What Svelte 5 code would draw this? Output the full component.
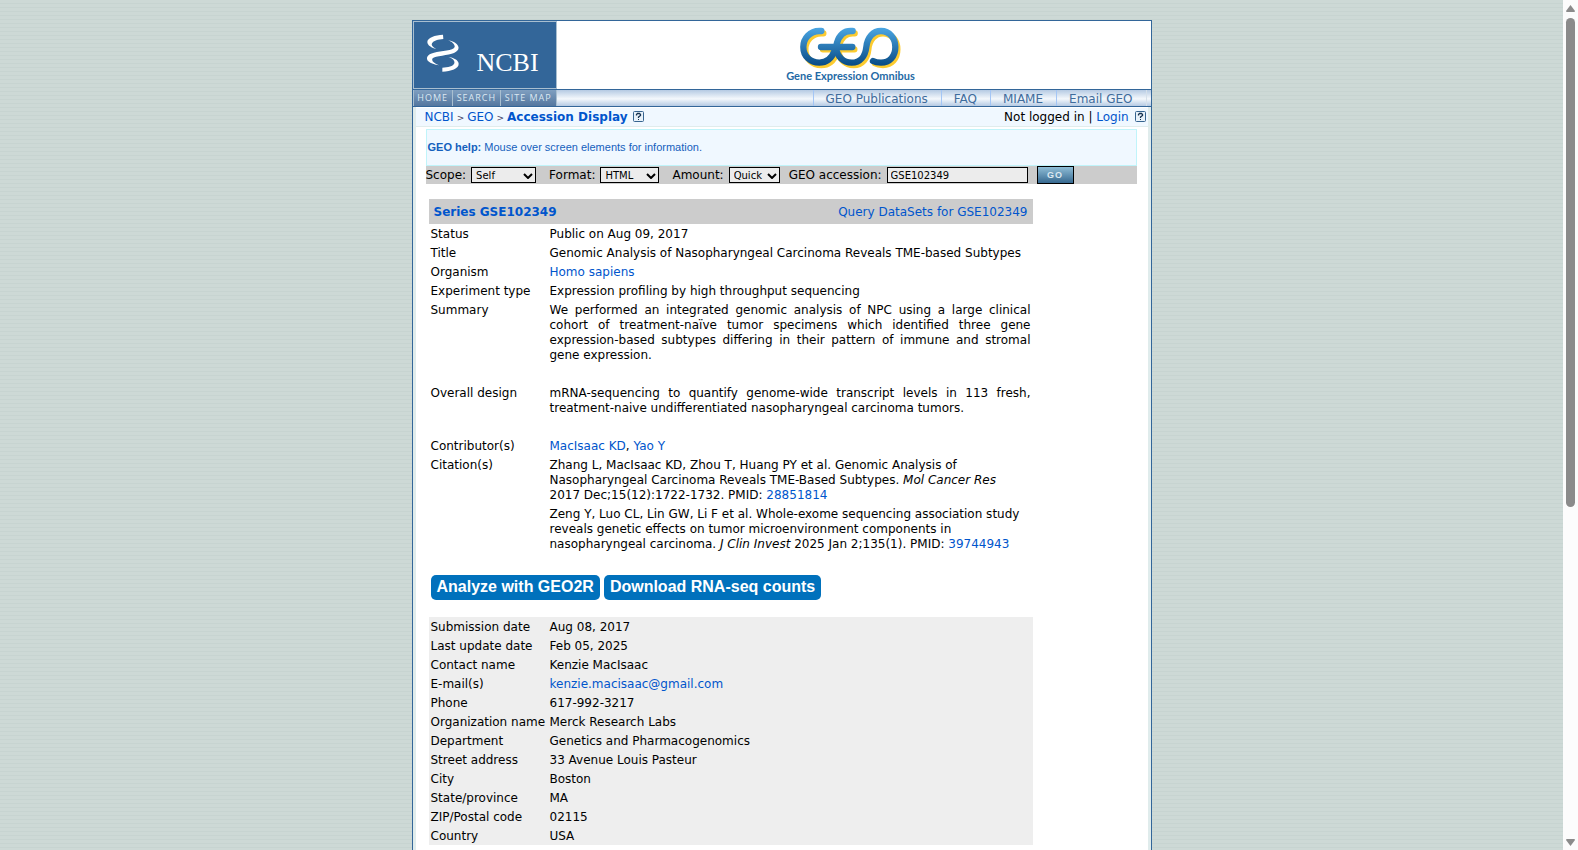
<script lang="ts">
	let scope = $state('Self');
	let format = $state('HTML');
	let amount = $state('Quick');
	let accession = $state('GSE102349');

	const siteLinks = ['HOME', 'SEARCH', 'SITE MAP'];
	const geoLinks = ['GEO Publications', 'FAQ', 'MIAME', 'Email GEO'];

	const contact: { label: string; value: string; href?: string }[] = [
		{ label: 'Submission date', value: 'Aug 08, 2017' },
		{ label: 'Last update date', value: 'Feb 05, 2025' },
		{ label: 'Contact name', value: 'Kenzie MacIsaac' },
		{ label: 'E-mail(s)', value: 'kenzie.macisaac@gmail.com', href: 'mailto:kenzie.macisaac@gmail.com' },
		{ label: 'Phone', value: '617-992-3217' },
		{ label: 'Organization name', value: 'Merck Research Labs' },
		{ label: 'Department', value: 'Genetics and Pharmacogenomics' },
		{ label: 'Street address', value: '33 Avenue Louis Pasteur' },
		{ label: 'City', value: 'Boston' },
		{ label: 'State/province', value: 'MA' },
		{ label: 'ZIP/Postal code', value: '02115' },
		{ label: 'Country', value: 'USA' },
	];
</script>

{#snippet help()}
	<a class="help" href="#help" aria-label="Help">
		<svg width="11" height="11" viewBox="0 0 11 11" aria-hidden="true">
			<rect x="0.5" y="0.5" width="10" height="10" rx="1" fill="#e8f2fa" stroke="#36648f" />
			<path d="M3.5 4.5V3.5L4.5 2.5H6.5L7.5 3.5V4.5L5.5 6V7" fill="none" stroke="#16324f" stroke-width="1.3" />
			<rect x="5" y="8" width="1" height="1" fill="#16324f" />
		</svg>
	</a>
{/snippet}

{#snippet mark()}
	<path d="M182 49H176C148 49 128 71 128 97C128 125 149 144 176 144C200 144 214 129 222 108L226 97H181" />
	<path d="M276 49H270C250 49 236 62 229 84L226 97H275" />
	<path d="M226 97C229 127 248 144 273 144C299 144 314 124 317 97C320 68 337 49 361 49C387 49 404 71 404 97C404 125 387 144 361 144C351 144 344 143 337 139" />
{/snippet}

<div class="page">
	<header>
		<div class="banner">
			<a class="ncbi" href="#ncbi">
				<svg width="32" height="38" viewBox="0 0 96 114" aria-hidden="true">
					<path d="M48 2C24 3 1 11 1 24C1 34 14 42 28 45C16 39 12 34 15 28C19 20 34 16 49 15Z" />
					<path d="M63 19C75 23 84 31 83 39C80 50 42 51 21 56C-1 61-4 74 4 82C11 89 23 92 36 94C20 87 12 80 17 73C24 66 65 64 81 57C97 50 98 39 89 30C82 24 73 21 63 19Z" />
					<path d="M64 69C78 73 84 81 82 88C79 97 63 101 46 101V113C72 112 96 103 95 89C94 78 80 71 64 69Z" />
				</svg>
				<span>NCBI</span>
			</a>
			<a class="geo" href="#geo">
				<svg width="102" height="42" viewBox="115 37 306 126" aria-hidden="true">
					<defs>
						<linearGradient id="blue" gradientUnits="userSpaceOnUse" x1="0" y1="40" x2="0" y2="155">
							<stop offset="0" stop-color="#4aa5e2" />
							<stop offset="1" stop-color="#074983" />
						</linearGradient>
					</defs>
					<g class="stroke shadow" transform="translate(6 7)">{@render mark()}</g>
					<g class="stroke" stroke="url(#blue)">{@render mark()}</g>
				</svg>
				<span>Gene Expression Omnibus</span>
			</a>
		</div>
		<div class="bar">
			<nav class="site">
				{#each siteLinks as link}<a href="#site">{link}</a>{/each}
			</nav>
			<nav class="geo-nav">
				{#each geoLinks as link}<a href="#geo">{link}</a>{/each}
			</nav>
		</div>
	</header>

	<main>
		<div class="crumbs">
			<span class="path">
				<a href="#ncbi">NCBI</a><small>&gt;</small><a href="#geo">GEO</a><small>&gt;</small><a href="#display"><b>Accession Display</b></a>
				{@render help()}
			</span>
			<span class="login">Not logged in | <a href="#login">Login</a> {@render help()}</span>
		</div>

		<div class="content">
			<div class="helpbox"><b>GEO help:</b> Mouse over screen elements for information.</div>

			<form onsubmit={(e) => e.preventDefault()}>
				<label for="scope">Scope:</label>
				<span class="pick scope">
					<select id="scope" bind:value={scope}>
						<option>Self</option><option>Platform</option><option>Samples</option><option>Series</option><option>Family</option>
					</select>
					<svg width="10" height="6" viewBox="0 0 10 6" aria-hidden="true"><path d="M1 1L5 5L9 1" /></svg>
				</span>
				<label for="format">Format:</label>
				<span class="pick format">
					<select id="format" bind:value={format}>
						<option>HTML</option><option>SOFT</option><option>MINiML</option>
					</select>
					<svg width="10" height="6" viewBox="0 0 10 6" aria-hidden="true"><path d="M1 1L5 5L9 1" /></svg>
				</span>
				<label for="amount">Amount:</label>
				<span class="pick amount">
					<select id="amount" bind:value={amount}>
						<option>Brief</option><option>Quick</option><option>Full</option><option>Data</option>
					</select>
					<svg width="10" height="6" viewBox="0 0 10 6" aria-hidden="true"><path d="M1 1L5 5L9 1" /></svg>
				</span>
				<label for="accession">GEO accession:</label>
				<input id="accession" type="text" bind:value={accession} />
				<button class="go" type="submit">GO</button>
			</form>

			<div class="record">
				<div class="title">
					<a href="#series"><b>Series GSE102349</b></a>
					<a href="#query">Query DataSets for GSE102349</a>
				</div>
				<table>
					<tbody>
						<tr><th>Status</th><td>Public on Aug 09, 2017</td></tr>
						<tr><th>Title</th><td>Genomic Analysis of Nasopharyngeal Carcinoma Reveals TME-based Subtypes</td></tr>
						<tr><th>Organism</th><td><a href="#organism">Homo sapiens</a></td></tr>
						<tr><th>Experiment type</th><td>Expression profiling by high throughput sequencing</td></tr>
						<tr class="long">
							<th>Summary</th>
							<td>We performed an integrated genomic analysis of NPC using a large clinical cohort of treatment-naïve tumor specimens which identified three gene expression-based subtypes differing in their pattern of immune and stromal gene expression.</td>
						</tr>
						<tr class="long">
							<th>Overall design</th>
							<td>mRNA-sequencing to quantify genome-wide transcript levels in 113 fresh, treatment-naive undifferentiated nasopharyngeal carcinoma tumors.</td>
						</tr>
						<tr><th>Contributor(s)</th><td><a href="#macisaac">MacIsaac KD</a>, <a href="#yao">Yao Y</a></td></tr>
						<tr>
							<th>Citation(s)</th>
							<td>
								<p>Zhang L, MacIsaac KD, Zhou T, Huang PY et al. Genomic Analysis of Nasopharyngeal Carcinoma Reveals TME-Based Subtypes. <i>Mol Cancer Res</i> <span class="issue">2017 Dec;15(12):1722-1732.</span> PMID: <a href="#28851814">28851814</a></p>
								<p>Zeng Y, Luo CL, Lin GW, Li F et al. Whole-exome sequencing association study reveals genetic effects on tumor microenvironment components in nasopharyngeal carcinoma. <i>J Clin Invest</i> <span class="issue">2025 Jan 2;135(1).</span> PMID: <a href="#39744943">39744943</a></p>
							</td>
						</tr>
					</tbody>
				</table>

				<div class="actions">
					<button type="button">Analyze with GEO2R</button>
					<button type="button">Download RNA-seq counts</button>
				</div>

				<table class="contact">
					<tbody>
						{#each contact as row}
							<tr>
								<th>{row.label}</th>
								<td>{#if row.href}<a href={row.href}>{row.value}</a>{:else}{row.value}{/if}</td>
							</tr>
						{/each}
					</tbody>
				</table>
			</div>
		</div>
	</main>
</div>

<div class="scrollbar" aria-hidden="true">
	<svg width="9" height="7" viewBox="0 0 9 7"><path d="M4.5 0L9 6Q9 7 8 7H1Q0 7 0 6Z" /></svg>
	<div class="track"><div class="thumb"></div></div>
	<svg width="9" height="7" viewBox="0 0 9 7"><path d="M4.5 7L9 1Q9 0 8 0H1Q0 0 0 1Z" /></svg>
</div>

<style>
	:global(body) {
		padding-right: 15px;
		background: repeating-linear-gradient(#cdd9d6 0 3px, #c7d4d1 3px 4px);
		color: #000;
		font-family: Verdana, 'DejaVu Sans', sans-serif;
		font-size: 12px;
		line-height: 15px;
	}

	a {
		color: #0055cc;
		text-decoration: none;
	}

	.page {
		box-sizing: border-box;
		display: flex;
		flex-direction: column;
		width: 740px;
		max-width: 100%;
		min-height: 100vh;
		margin: 0 auto;
		padding-top: 20px;
	}

	header {
		border: 1px solid #336699;
		border-bottom: 0;
		background: #fff;
	}

	.banner {
		display: flex;
		height: 68px;
	}

	.ncbi {
		box-sizing: border-box;
		width: 144px;
		border: 1px solid #a9bfd0;
		background: #336699;
		color: #fff;
		display: flex;
		align-items: flex-end;
		gap: 18px;
		padding: 0 0 12px 13px;
		font: 26px/26px 'Liberation Serif', serif;
	}

	.ncbi svg {
		fill: #fff;
		margin-bottom: 4px;
	}

	.geo {
		flex: 1;
		display: flex;
		flex-direction: column;
		align-items: center;
		padding: 6px 6px 0 0;
		font: bold 11px/14px Lato, sans-serif;
		color: #1f6aa5;
	}

	.geo svg {
		margin-right: 2px;
	}

	.stroke {
		fill: none;
		stroke-width: 19;
		stroke-linecap: round;
		stroke-linejoin: round;
	}

	.shadow {
		stroke: #fccb2f;
	}

	.bar {
		display: flex;
		justify-content: space-between;
		height: 16px;
		border-top: 1px solid #336699;
		border-bottom: 1px solid #336699;
		background: linear-gradient(#b5cae3, #f4f8fc 55%, #b5cae3);
	}

	.site {
		display: flex;
		width: 144px;
		box-sizing: border-box;
		border: solid #a9bfd0;
		border-width: 0 1px;
		background: linear-gradient(#7f9fc0, #54779f);
	}

	.site a {
		flex: 1 1 auto;
		text-align: center;
		color: #dce8f2;
		font: 9px/16px 'Open Sans', sans-serif;
		letter-spacing: 1px;
	}

	.site a + a {
		border-left: 1px solid #a9bfd0;
	}

	.geo-nav {
		display: flex;
		border-right: 1px solid #d5e0ea;
		margin-right: 4px;
	}

	.geo-nav a {
		padding: 0 13px 0 12px;
		border-left: 1px solid #a4c6f5;
		color: #3f6c9c;
		line-height: 18px;
	}

	main {
		flex: 1;
		border: solid #336699;
		border-width: 0 1px;
		background: #fff;
		box-shadow: inset 3px 0 #e0ecec, inset -3px 0 #e0ecec;
		padding: 1px 3px 0;
	}

	.crumbs {
		display: flex;
		justify-content: space-between;
		padding: 2px 2px 0 9px;
		background: #f0f8ff;
		border-bottom: 1px solid #e0ecec;
	}

	.crumbs small {
		margin: 0 3px;
		font-size: 9px;
		color: #446;
	}

	.help {
		margin-left: 2px;
	}

	.help svg {
		vertical-align: -1px;
	}

	.content {
		margin: 2px 11px 0 10px;
	}

	.helpbox {
		border: 1px solid #c0f4fa;
		background: #f0f8ff;
		color: #1560bd;
		padding: 10px 1px;
		font: 11px/15px 'Liberation Sans', Arial, sans-serif;
	}

	form {
		display: flex;
		align-items: center;
		height: 18px;
		background: #ccc;
	}

	label {
		margin-right: 5px;
	}

	.pick {
		position: relative;
		display: flex;
		margin-right: 13px;
	}

	.pick.amount {
		margin-right: 9px;
	}

	.pick svg {
		position: absolute;
		right: 3px;
		top: 6px;
		pointer-events: none;
		fill: none;
		stroke: #000;
		stroke-width: 2;
	}

	select,
	input {
		box-sizing: border-box;
		appearance: none;
		height: 16px;
		border: 1px solid #000;
		border-radius: 0;
		background: #ececec;
		color: #000;
		padding: 1px 4px 0;
		font: 10px/13px Verdana, 'DejaVu Sans', sans-serif;
	}

	.scope select {
		width: 65px;
	}

	.format select {
		width: 59px;
	}

	.amount select {
		width: 51px;
	}

	input {
		width: 141px;
		padding: 0 3px;
	}

	.go {
		width: 37px;
		height: 18px;
		margin-left: 9px;
		padding: 0;
		border: 1px solid #000;
		background: linear-gradient(#8fbdd6, #376990);
		color: #dde9f1;
		font: bold 9px/14px 'Liberation Sans', sans-serif;
		letter-spacing: 1px;
	}

	.record {
		margin-left: 3px;
		width: 604px;
		max-width: 100%;
	}

	.title {
		display: flex;
		justify-content: space-between;
		margin-top: 15px;
		padding: 6px 5px 4px;
		background: #ccc;
	}

	table {
		width: 100%;
		border-collapse: collapse;
	}

	th,
	td {
		padding: 3px 2px 1px;
		vertical-align: top;
		text-align: left;
		font-weight: normal;
	}

	th {
		width: 115px;
		white-space: nowrap;
	}

	.long td {
		padding-bottom: 20px;
		text-align: justify;
	}

	p {
		margin: 0;
	}

	p + p {
		margin-top: 4px;
	}

	.issue {
		white-space: nowrap;
	}

	.actions {
		display: flex;
		gap: 4px;
		padding: 22px 2px 17px;
	}

	.actions button {
		height: 25px;
		padding: 0 6px 2px;
		border: 0;
		border-radius: 5px;
		background: #0071bc;
		color: #fff;
		font: bold 16px/20px 'Liberation Sans', Arial, sans-serif;
	}

	.contact {
		background: #eee;
	}

	.scrollbar {
		position: fixed;
		top: 0;
		right: 0;
		bottom: 0;
		width: 15px;
		box-sizing: border-box;
		padding: 5px 0 4px;
		background: #fcfcfc;
		display: flex;
		flex-direction: column;
		align-items: center;
		gap: 6px;
	}

	.scrollbar svg {
		fill: #8b8b8b;
	}

	.track {
		flex: 1;
	}

	.thumb {
		width: 9px;
		height: 60%;
		border-radius: 5px;
		background: #8b8b8b;
	}
</style>
